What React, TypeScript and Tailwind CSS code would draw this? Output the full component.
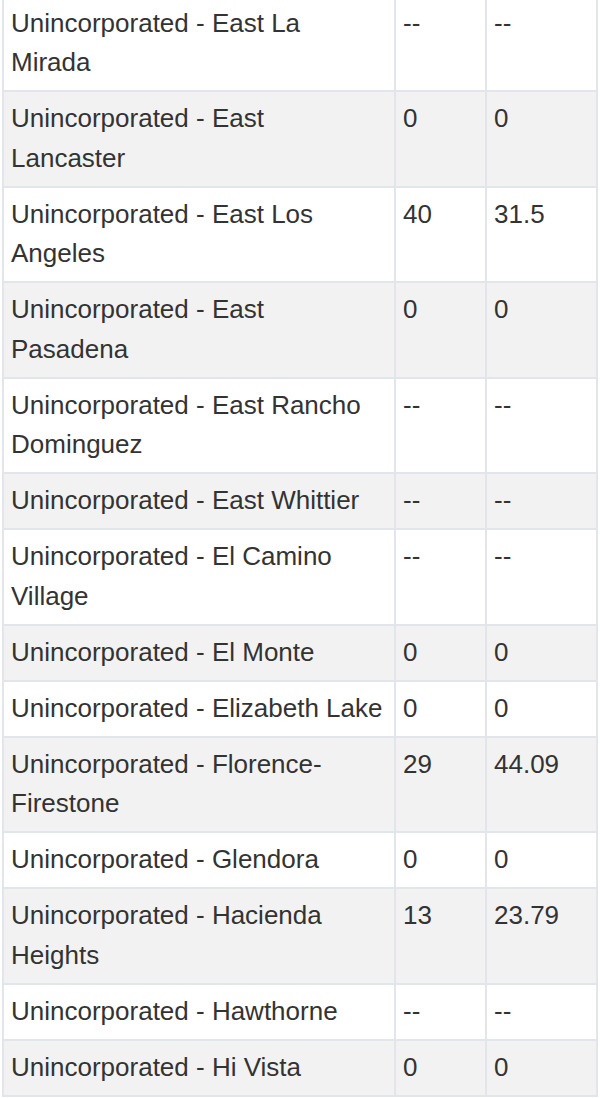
const rows: [string, string, string][] = [
  ["Unincorporated - East La Mirada", "--", "--"],
  ["Unincorporated - East Lancaster", "0", "0"],
  ["Unincorporated - East Los Angeles", "40", "31.5"],
  ["Unincorporated - East Pasadena", "0", "0"],
  ["Unincorporated - East Rancho Dominguez", "--", "--"],
  ["Unincorporated - East Whittier", "--", "--"],
  ["Unincorporated - El Camino Village", "--", "--"],
  ["Unincorporated - El Monte", "0", "0"],
  ["Unincorporated - Elizabeth Lake", "0", "0"],
  ["Unincorporated - Florence-Firestone", "29", "44.09"],
  ["Unincorporated - Glendora", "0", "0"],
  ["Unincorporated - Hacienda Heights", "13", "23.79"],
  ["Unincorporated - Hawthorne", "--", "--"],
  ["Unincorporated - Hi Vista", "0", "0"],
];

const cell = "border-2 border-[#e2e5e9] align-top py-[7.25px]";

export default function App() {
  return (
    <div className="h-[1098px] overflow-hidden bg-white">
      <table
        className="-mt-[5.5px] ml-[2px] w-[596px] table-fixed border-collapse text-[26px] leading-[39.5px] text-[#333]"
        style={{ fontFamily: '"Liberation Sans", Arial, sans-serif' }}
      >
        <colgroup>
          <col className="w-[392px]" />
          <col className="w-[91px]" />
          <col className="w-[111px]" />
        </colgroup>
        <tbody>
          {rows.map(([name, a, b], i) => (
            <tr key={name} className={i % 2 === 1 ? "bg-[#f2f2f2]" : "bg-white"}>
              <td className={`${cell} pl-[7px] pr-[11px]`}>{name}</td>
              <td className={`${cell} px-[7px]`}>{a}</td>
              <td className={`${cell} px-[7px]`}>{b}</td>
            </tr>
          ))}
        </tbody>
      </table>
    </div>
  );
}
